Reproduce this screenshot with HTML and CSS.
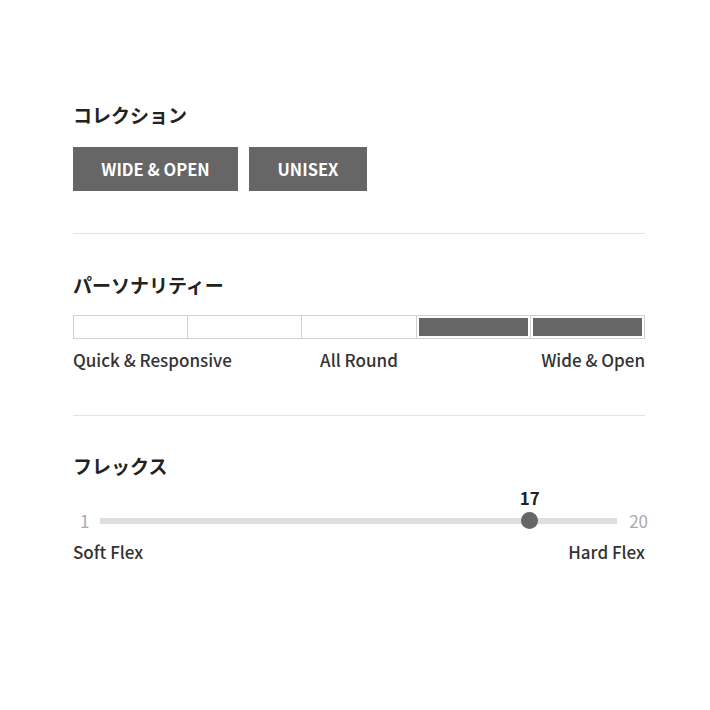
FILE: index.html
```html
<!DOCTYPE html>
<html lang="ja">
<head>
<meta charset="utf-8">
<link rel="stylesheet" href="styles.css">
</head>
<body>
<main class="panel">
  <section class="section">
    <h2 class="heading">コレクション</h2>
    <div class="tags">
      <span class="tag">WIDE &amp; OPEN</span>
      <span class="tag">UNISEX</span>
    </div>
  </section>
  <hr class="divider">
  <section class="section">
    <h2 class="heading">パーソナリティー</h2>
    <div class="scale">
      <div class="seg"><div class="fill"></div></div>
      <div class="seg"><div class="fill"></div></div>
      <div class="seg"><div class="fill"></div></div>
      <div class="seg"><div class="fill on"></div></div>
      <div class="seg"><div class="fill on"></div></div>
    </div>
    <div class="labels three">
      <span>Quick &amp; Responsive</span>
      <span>All Round</span>
      <span>Wide &amp; Open</span>
    </div>
  </section>
  <hr class="divider second">
  <section class="section">
    <h2 class="heading">フレックス</h2>
    <div class="slider">
      <span class="end">1</span>
      <div class="track">
        <div class="thumb" style="left: calc((100% - 17px) * 0.8421)">
          <span class="value">17</span>
        </div>
      </div>
      <span class="end">20</span>
    </div>
    <div class="labels two">
      <span>Soft Flex</span>
      <span>Hard Flex</span>
    </div>
  </section>
</main>
</body>
</html>
```
FILE: styles.css
```css
html, body {
  margin: 0;
  padding: 0;
  background: #fff;
}
body {
  font-family: "Noto Sans CJK JP", "Noto Sans", sans-serif;
  color: #222;
}
.panel {
  width: 572px;
  margin-left: 73px;
  padding-top: 102px;
}
.heading {
  margin: 0;
  font-size: 19px;
  line-height: 26px;
  font-weight: 700;
  color: #222;
}
.tags {
  display: flex;
  gap: 11px;
  margin-top: 19px;
}
.tag {
  display: flex;
  align-items: center;
  justify-content: center;
  height: 44px;
  background: #666;
  color: #fff;
  font-size: 16.5px;
  font-weight: 700;
}
.tag:first-child { width: 165px; }
.tag:last-child { width: 118px; }
.divider {
  border: 0;
  height: 1px;
  background: #e3e3e3;
  margin: 42px 0 38px;
}
.divider.second {
  margin: 44px 0 37px;
}
.scale {
  display: flex;
  margin-top: 17px;
  height: 24px;
  padding-left: 1px;
}
.seg {
  flex: 1;
  border: 1px solid #d2d2d2;
  margin-left: -1px;
  padding: 2px;
}
.fill {
  height: 100%;
}
.fill.on {
  background: #666;
}
.labels {
  margin-top: 10px;
  font-size: 17px;
  line-height: 22px;
  font-weight: 500;
  color: #333;
}
.labels.three {
  display: grid;
  grid-template-columns: 1fr auto 1fr;
}
.labels.three span:nth-child(2) { justify-self: center; }
.labels.three span:nth-child(3) { justify-self: end; }
.labels.two {
  display: flex;
  justify-content: space-between;
}
.slider {
  display: flex;
  align-items: center;
  height: 21px;
  margin-top: 31px;
  font-size: 17px;
  color: #aaa;
}
.end:first-child {
  margin-left: 7px;
  margin-right: 11px;
}
.end:last-child {
  margin-left: 12px;
  margin-right: -3px;
}
.track {
  position: relative;
  flex: 1;
  height: 6px;
  background: #dedede;
}
.thumb {
  position: absolute;
  top: -6px;
  width: 17px;
  height: 17px;
  border-radius: 50%;
  background: #666;
}
.value {
  position: absolute;
  left: 50%;
  bottom: 20px;
  transform: translateX(-50%);
  font-size: 17px;
  line-height: 22px;
  font-weight: 700;
  color: #222;
}
```
